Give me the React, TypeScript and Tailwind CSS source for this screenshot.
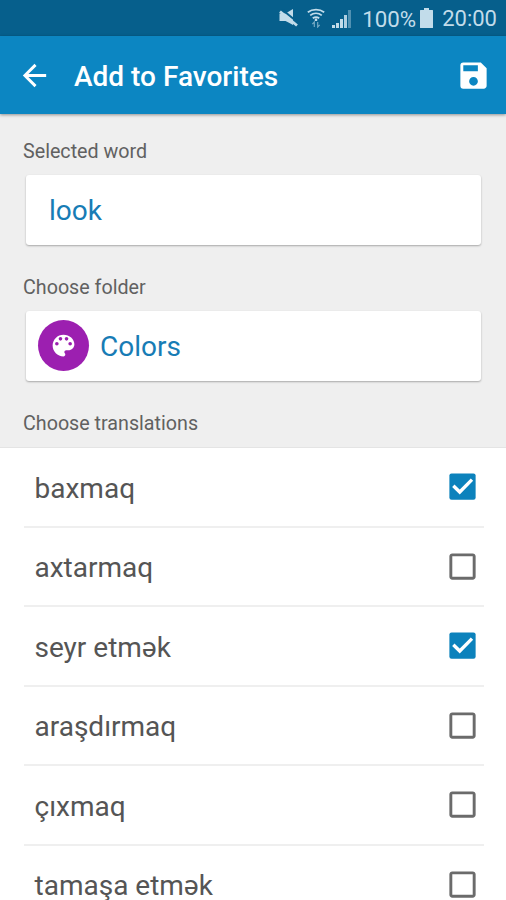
import { useState } from "react";
import { MdArrowBack, MdCheckBoxOutlineBlank, MdSave } from "react-icons/md";

const initialTranslations = [
  { word: "baxmaq", checked: true },
  { word: "axtarmaq", checked: false },
  { word: "seyr etmək", checked: true },
  { word: "araşdırmaq", checked: false },
  { word: "çıxmaq", checked: false },
  { word: "tamaşa etmək", checked: false },
];

function MuteIcon() {
  return (
    <svg className="h-5 w-5" viewBox="0 0 20 20" fill="currentColor">
      <path d="M1.500 5.500h6L15 1v16l-4.500-2.500L7.500 13h-6z" />
      <path d="M4 1.500l16 13" stroke="#065f8c" strokeWidth="2" />
      <path d="M2 3.500l17 14" stroke="currentColor" strokeWidth="2.800" />
    </svg>
  );
}

function WifiIcon() {
  return (
    <svg className="h-5 w-[18px]" viewBox="0 0 18 20" fill="none" stroke="currentColor" strokeWidth="1.800">
      <path d="M.8 4.200C5.500.8 12.500.8 17.200 4.200" />
      <path d="M3.200 7.400c3.400-2.600 8.200-2.600 11.600 0" />
      <path d="M5.800 10.300c2-1.500 4.400-1.500 6.400 0" />
      <path d="M9 10.500v2.500" strokeWidth="2.400" />
      <path d="M7.300 19v-5l-2 2.200M10.700 14v5l2-2.200" strokeWidth="1.200" opacity=".6" />
    </svg>
  );
}

function SignalIcon() {
  return (
    <svg className="h-[19px] w-[19px]" viewBox="0 0 19 19" fill="currentColor">
      <path d="M0 16h3v3H0zM4 14h3v5H4zM8 10h3v9H8z" />
      <path d="M12 6h3v13h-3z" opacity=".9" />
      <path d="M16 1h3v18h-3z" opacity=".4" />
    </svg>
  );
}

function BatteryIcon() {
  return (
    <svg className="h-5 w-[13px]" viewBox="0 0 13 20" fill="currentColor">
      <path d="M4 0h5v2h3.500a.5.5 0 0 1 .5.500v17a.5.5 0 0 1-.5.500H.5a.5.5 0 0 1-.5-.5v-17A.5.5 0 0 1 .5 2H4z" />
    </svg>
  );
}

function PaletteIcon() {
  return (
    <svg className="h-[29px] w-[29px]" viewBox="0 0 24 24" fill="currentColor">
      <path d="M12 3c-4.970 0-9 4.030-9 9s4.030 9 9 9c.83 0 1.500-.67 1.500-1.500 0-.39-.15-.74-.39-1.010-.23-.26-.38-.61-.38-.99 0-.83.67-1.500 1.500-1.500H16c2.760 0 5-2.240 5-5 0-4.420-4.030-8-9-8z" />
      <g fill="#9c1fb0">
        <circle cx="6.500" cy="10.500" r="1.500" />
        <circle cx="9.500" cy="6.500" r="1.500" />
        <circle cx="14.500" cy="6.500" r="1.500" />
        <circle cx="17.500" cy="10.500" r="1.500" />
      </g>
    </svg>
  );
}

function CheckedBox() {
  return (
    <svg className="h-[35px] w-[35px]" viewBox="0 0 24 24" fill="none">
      <rect x="3" y="3" width="18" height="18" rx="1.500" fill="#0c82bc" />
      <path d="M5.700 11.500l4.400 4.300 8.400-8.500" stroke="#fff" strokeWidth="2.300" />
    </svg>
  );
}

export default function App() {
  const [translations, setTranslations] = useState(initialTranslations);

  function toggle(word: string) {
    setTranslations((items) =>
      items.map((item) => (item.word === word ? { ...item, checked: !item.checked } : item)),
    );
  }

  return (
    <main className="flex h-[900px] w-[506px] flex-col overflow-hidden bg-[#efefef] font-['Roboto','Noto_Sans',sans-serif]">
      <div className="flex h-9 shrink-0 items-center bg-[#065f8c] pr-[9px] pl-[278px] text-[#c2dcea]">
        <MuteIcon />
        <span className="ml-[9px] flex"><WifiIcon /></span>
        <span className="ml-[7px] flex"><SignalIcon /></span>
        <span className="ml-auto pt-0.5 text-[22.3px] leading-[34px]">100%</span>
        <span className="mr-[9px] ml-1 flex"><BatteryIcon /></span>
        <span className="pt-0.5 text-[22px] leading-[34px]">20:00</span>
      </div>

      <header className="z-10 flex h-[78px] shrink-0 items-center bg-[#0c86c2] pr-[15.5px] pl-[17px] text-white shadow-[0_1px_3px_rgba(0,0,0,0.4)]">
        <button type="button" aria-label="Back">
          <MdArrowBack className="h-[35px] w-[35px]" />
        </button>
        <h1 className="ml-[22px] pt-[3px] text-[28px] font-medium">Add to Favorites</h1>
        <button type="button" aria-label="Save" className="ml-auto">
          <MdSave className="h-[35px] w-[35px]" />
        </button>
      </header>

      <section className="h-[334px] shrink-0 border-b border-[#e4e4e4] pt-[23px] pr-[25px] pl-[26px] text-[19.7px] text-[#616161]">
        <h2 className="-ml-[3px] leading-[30px]">Selected word</h2>
        <div className="mt-2 flex h-[70px] items-center rounded-[3px] bg-white pt-0.5 pl-[23px] text-[28px] text-[#177cb5] shadow-[0_1px_2px_rgba(0,0,0,0.3)]">
          look
        </div>
        <h2 className="mt-7 -ml-[3px] leading-[30px]">Choose folder</h2>
        <button
          type="button"
          className="mt-2 flex h-[70px] w-full items-center rounded-[3px] bg-white pl-3 text-[28px] text-[#177cb5] shadow-[0_1px_2px_rgba(0,0,0,0.3)]"
        >
          <span className="mr-[11px] mb-px flex h-[51px] w-[51px] items-center justify-center rounded-full bg-[#9c1fb0] text-white">
            <PaletteIcon />
          </span>
          <span className="pt-0.5">Colors</span>
        </button>
        <h2 className="mt-7 -ml-[3px] leading-[30px]">Choose translations</h2>
      </section>

      <ul className="shrink-0 bg-white pr-[22px] pl-6">
        {translations.map(({ word, checked }) => (
          <li key={word} className="h-[79.5px] border-b-2 border-[#efefef]">
            <button
              type="button"
              role="checkbox"
              aria-checked={checked}
              onClick={() => toggle(word)}
              className="flex h-full w-full items-center justify-between pr-[4.5px] pl-[10.5px] text-[28px] text-[#555]"
            >
              <span className="pt-[4px]">{word}</span>
              {checked ? (
                <CheckedBox />
              ) : (
                <MdCheckBoxOutlineBlank className="h-[35px] w-[35px] text-[#6b6b6b]" />
              )}
            </button>
          </li>
        ))}
      </ul>
    </main>
  );
}
